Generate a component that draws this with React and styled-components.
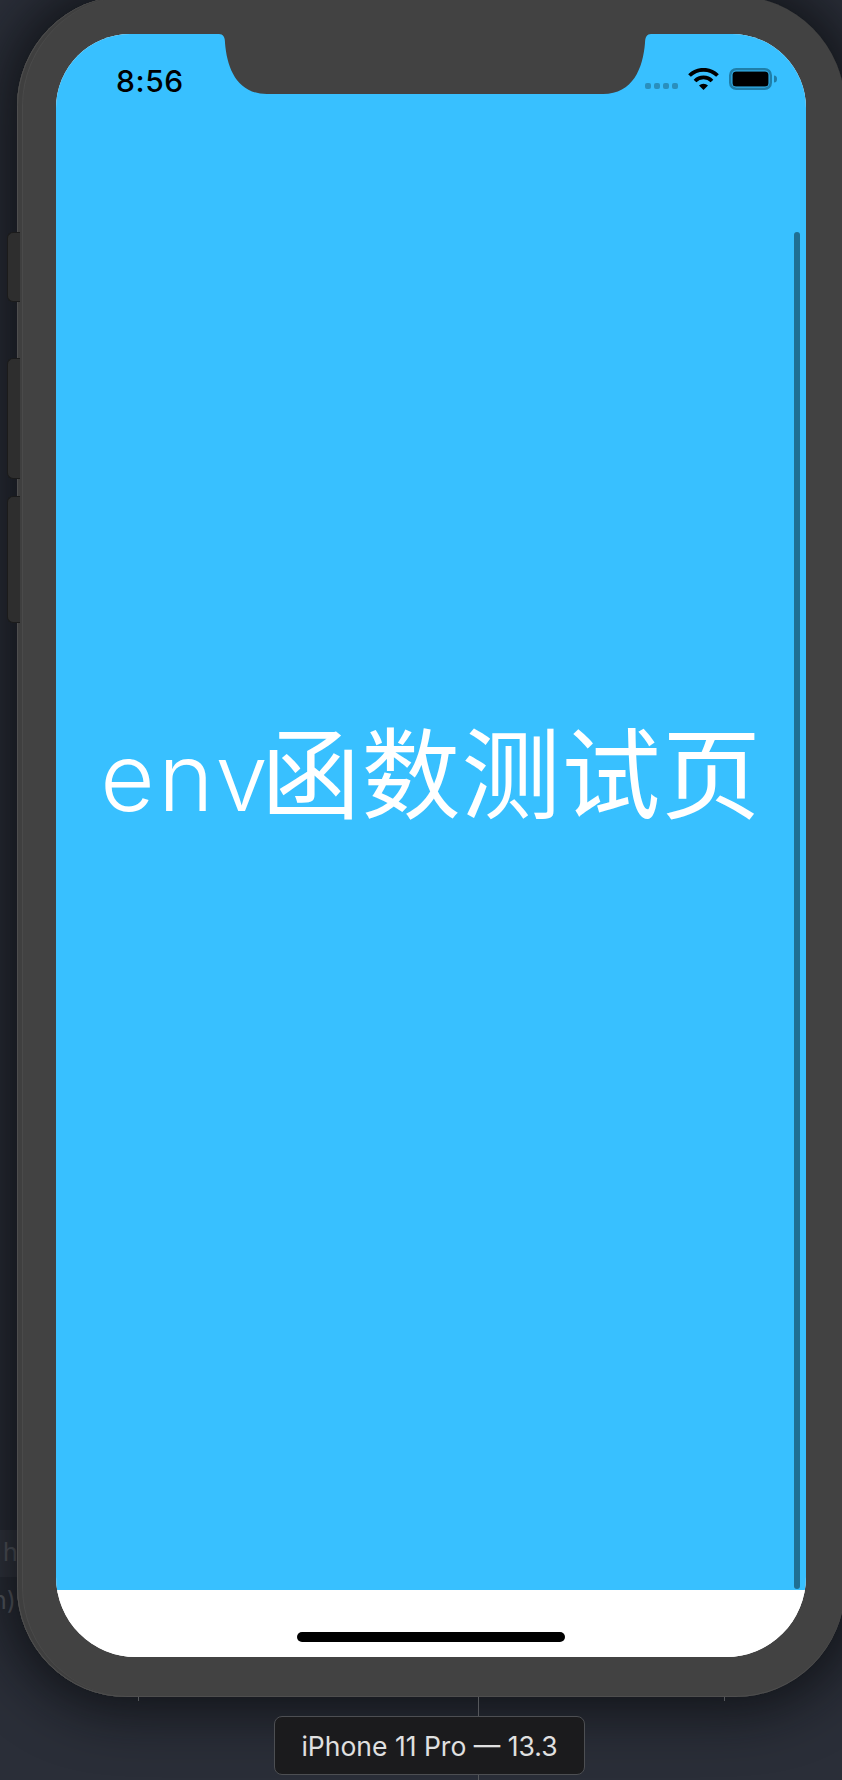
import React from "react";
import styled, { createGlobalStyle } from "styled-components";

const Global = createGlobalStyle`
  html, body { margin: 0; padding: 0; width: 842px; height: 1780px; overflow: hidden; background: #2a2e38; }
  #root { width: 842px; height: 1780px; }
`;

const Stage = styled.div`
  position: relative;
  display: flex;
  flex-direction: column;
  align-items: flex-start;
  width: 842px;
  height: 1780px;
  overflow: hidden;
  box-sizing: border-box;
  padding-left: 17px;
  background: #2a2e38;
`;

const EditorBand = styled.div`
  position: absolute;
  left: 0;
  top: 1530px;
  width: 17px;
  height: 47px;
  background: rgba(255, 255, 255, 0.05);
`;

const CodeFragment = styled.span`
  position: absolute;
  left: ${(p) => p.$left}px;
  top: ${(p) => p.$top}px;
  font-family: "Inter", sans-serif;
  font-size: 25px;
  line-height: 30px;
  color: #5d6169;
`;

const Guide = styled.div`
  position: absolute;
  left: ${(p) => p.$left}px;
  top: ${(p) => p.$top}px;
  width: 1px;
  height: ${(p) => p.$height}px;
  background: #55575b;
`;

const Phone = styled.div`
  position: relative;
  flex: none;
  width: 828px;
  height: 1701px;
  margin-top: -4px;
  box-sizing: border-box;
  padding: 38px 0 0 39px;
  background: #424242;
  border-radius: 110px;
  box-shadow:
    inset 1px 0 0 #4e4e4e,
    inset 0 -1px 0 #4e4e4e,
    inset 5px 0 0 #3f3f3f,
    inset 6px 0 0 #4a4a4a,
    0 0 55px 14px rgba(8, 10, 13, 0.72);
`;

const SideButton = styled.div`
  position: absolute;
  left: -10px;
  top: ${(p) => p.$top}px;
  width: 13px;
  height: ${(p) => p.$height}px;
  box-sizing: border-box;
  background: #2e2e2e;
  border: 1px solid #1b1b1b;
  border-right: none;
  border-radius: 6px 0 0 6px;
`;

const Screen = styled.main`
  display: flex;
  flex-direction: column;
  width: 750px;
  height: 1623px;
  overflow: hidden;
  background: #fff;
  border-radius: 74px 74px 80px 80px;
`;

const Content = styled.section`
  position: relative;
  flex: 1;
  display: flex;
  flex-direction: column;
  background: #38c0ff;
`;

const StatusBar = styled.header`
  flex: none;
  display: flex;
  height: 60px;
`;

const StatusLeft = styled.div`
  flex: 1;
  box-sizing: border-box;
  padding: 33px 0 0 60px;
  display: flex;
  align-items: center;
`;

const StatusRight = styled.div`
  flex: 1;
  box-sizing: border-box;
  padding: 30px 29px 0 0;
  display: flex;
  align-items: center;
  justify-content: flex-end;
  gap: 10px;
`;

const Notch = styled.svg`
  flex: none;
  width: 420px;
  height: 60px;
  display: block;
  overflow: visible;
`;

const Time = styled.span`
  font-family: "Inter", sans-serif;
  font-size: 30px;
  font-weight: 500;
  line-height: 32px;
  color: #000;
  letter-spacing: 0.6px;
`;

const SignalDots = styled.div`
  display: flex;
  gap: 2.5px;
  margin-top: 14px;
`;

const Dot = styled.span`
  width: 6.5px;
  height: 6px;
  border-radius: 2px;
  background: #2a8fbd;
`;

const TitleArea = styled.div`
  flex: 1;
  display: flex;
  align-items: center;
  justify-content: center;
  padding-bottom: 141px;
`;

const Title = styled.h1`
  margin: 0;
  display: flex;
  align-items: baseline;
  font-weight: 400;
  line-height: 1.2;
  color: #fff;
  white-space: nowrap;
`;

const TitleLatin = styled.span`
  font-family: "Inter", sans-serif;
  font-size: 94px;
  font-weight: 300;
  letter-spacing: 3.5px;
`;

const TitleCjk = styled.span`
  margin-left: -10px;
  font-family: "Noto Sans CJK SC", sans-serif;
  font-size: 99px;
  font-weight: 400;
  letter-spacing: 1.1px;
`;

const Scrollbar = styled.div`
  position: absolute;
  top: 198px;
  right: 6px;
  bottom: 1px;
  width: 6px;
  border-radius: 3px;
  background: #1f6f94;
`;

const HomeArea = styled.div`
  flex: none;
  height: 67px;
  display: flex;
  justify-content: center;
  align-items: flex-start;
  padding-top: 42px;
  box-sizing: border-box;
  background: #fff;
`;

const HomeBar = styled.div`
  width: 268px;
  height: 10px;
  margin-right: 1px;
  border-radius: 5px;
  background: #000;
`;

const Label = styled.div`
  flex: none;
  margin: 19px 0 0 257px;
  width: 311px;
  height: 59px;
  box-sizing: border-box;
  display: flex;
  align-items: center;
  justify-content: center;
  border: 1.5px solid #4d4f53;
  border-radius: 8px;
  background: #1b1b1d;
  color: #e0e0e0;
  font-family: "Inter", sans-serif;
  font-size: 26.5px;
  white-space: nowrap;
  position: relative;
`;

export default function App() {
  return (
    <Stage>
      <Global />
      <EditorBand />
      <CodeFragment $left={3} $top={1537}>h</CodeFragment>
      <CodeFragment $left={-8} $top={1585}>n)</CodeFragment>
      <Phone>
        <SideButton $top={236} $height={70} />
        <SideButton $top={362} $height={121} />
        <SideButton $top={500} $height={127} />
        <Screen>
          <Content>
            <StatusBar>
              <StatusLeft>
                <Time>8:56</Time>
              </StatusLeft>
              <Notch viewBox="0 0 420 60">
                <path d="M-6 0 C-2 0 0 3 0 9 C2 34 12 60 42 60 H378 C408 60 418 34 420 9 C420 3 422 0 426 0 Z" fill="#424242" />
              </Notch>
              <StatusRight>
                <SignalDots>
                  <Dot /><Dot /><Dot /><Dot />
                </SignalDots>
                <svg width="31" height="22" viewBox="0 0 31 22">
                  <path d="M1.5 7.5 A20 20 0 0 1 29.5 7.5" fill="none" stroke="#000" strokeWidth="3.8" />
                  <path d="M7 13 A12 12 0 0 1 24 13" fill="none" stroke="#000" strokeWidth="3.8" />
                  <path d="M11 17.5 L15.5 22 L20 17.5 A6.5 6.5 0 0 0 11 17.5 Z" fill="#000" />
                </svg>
                <svg width="48" height="22" viewBox="0 0 48 22">
                  <rect x="1.25" y="1.25" width="40.5" height="19.5" rx="6" fill="none" stroke="#1f7ea9" strokeWidth="2.5" />
                  <rect x="3.5" y="3.5" width="36" height="15" rx="3.5" fill="#000" />
                  <path d="M45 7.5 a3 3.5 0 0 1 0 7 Z" fill="#1f7ea9" />
                </svg>
              </StatusRight>
            </StatusBar>
            <TitleArea>
              <Title>
                <TitleLatin>env</TitleLatin>
                <TitleCjk>函数测试页</TitleCjk>
              </Title>
            </TitleArea>
            <Scrollbar />
          </Content>
          <HomeArea>
            <HomeBar />
          </HomeArea>
        </Screen>
        <Guide $left={121} $top={1701} $height={4} />
        <Guide $left={461} $top={1701} $height={20} />
        <Guide $left={707} $top={1701} $height={4} />
      </Phone>
      <Label>iPhone 11 Pro — 13.3</Label>
      <Guide $left={478} $top={1775} $height={5} />
    </Stage>
  );
}
